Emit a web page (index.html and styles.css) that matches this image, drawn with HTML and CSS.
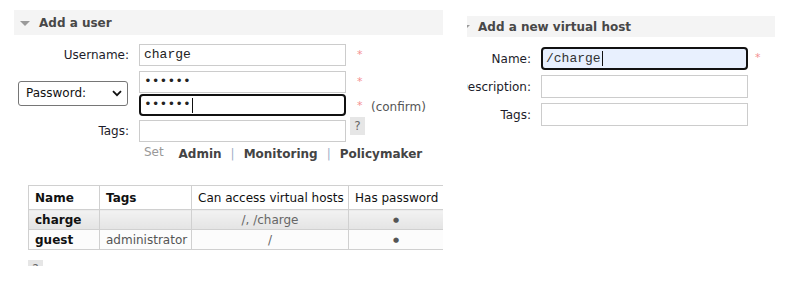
FILE: index.html
```html
<!DOCTYPE html>
<html lang="en">
<head>
    <meta charset="UTF-8">
    <title>Users and virtual hosts</title>
    <link rel="stylesheet" href="styles.css">
</head>
<body>
    <div class="panel users">
        <div class="section-head">
            <span class="arrow"></span>
            <h2>Add a user</h2>
        </div>

        <div class="user-form">
            <div class="label">Username:</div>
            <div class="field">charge</div>
            <div class="req">*</div>

            <div class="pick">
                <span>Password:</span>
                <svg width="10" height="7" viewBox="0 0 10 7"><path d="M1 1.2 L5 5.2 L9 1.2" fill="none" stroke="#111" stroke-width="1.8"/></svg>
            </div>
            <div class="field row-pw">••••••</div>
            <div class="req row-pw">*</div>

            <div class="field focus row-confirm">••••••<span class="caret"></span></div>
            <div class="req row-confirm">* <span class="note">(confirm)</span></div>

            <div class="label row-tags">Tags:</div>
            <div class="field row-tags"></div>
            <div class="help row-tags">?</div>

            <div class="set-line">
                <span class="set">Set</span>
                <b>Admin</b><span class="sep">|</span><b>Monitoring</b><span class="sep">|</span><b>Policymaker</b>
            </div>
        </div>

        <table class="list">
            <colgroup>
                <col class="c-name">
                <col class="c-tags">
                <col class="c-vh">
                <col class="c-pw">
            </colgroup>
            <thead>
                <tr>
                    <th>Name</th>
                    <th>Tags</th>
                    <th class="plain">Can access virtual hosts</th>
                    <th class="plain">Has password</th>
                </tr>
            </thead>
            <tbody>
                <tr class="alt">
                    <td><b>charge</b></td>
                    <td></td>
                    <td class="mid">/, /charge</td>
                    <td class="mid dot">●</td>
                </tr>
                <tr>
                    <td><b>guest</b></td>
                    <td class="grey">administrator</td>
                    <td class="mid">/</td>
                    <td class="mid dot">●</td>
                </tr>
            </tbody>
        </table>

        <div class="help bottom">?</div>
    </div>

    <div class="panel vhosts">
        <div class="section-head small">
            <span class="arrow"></span>
            <h2>Add a new virtual host</h2>
        </div>

        <div class="vhost-form">
            <div class="label"><span>Name:</span></div>
            <div class="field focus filled">/charge<span class="caret"></span></div>
            <div class="req">*</div>

            <div class="label"><span>Description:</span></div>
            <div class="field"></div>
            <div></div>

            <div class="label"><span>Tags:</span></div>
            <div class="field"></div>
            <div></div>
        </div>
    </div>
</body>
</html>
```

FILE: styles.css
```css
body {
    margin: 0;
    padding: 0;
    background: #fff;
    font-family: "DejaVu Sans", Verdana, sans-serif;
    font-size: 12px;
    color: #222;
    display: flex;
    align-items: flex-start;
}

.panel {
    overflow: hidden;
}

.users {
    width: 443px;
    height: 266px;
    padding: 10px 0 0 14px;
    box-sizing: border-box;
}

.vhosts {
    width: 321px;
    height: 285px;
    margin-left: 24px;
    padding-top: 16px;
    box-sizing: border-box;
}

/* section headers */
.section-head {
    display: flex;
    align-items: center;
    height: 25px;
    background: #f4f4f4;
}

.section-head h2 {
    margin: 0;
    font-size: 12px;
    font-weight: bold;
    color: #484848;
}

.arrow {
    width: 0;
    height: 0;
    border-left: 5px solid transparent;
    border-right: 5px solid transparent;
    border-top: 5px solid #9a9a9a;
    margin: 1px 9px 0 6px;
}

.section-head.small {
    height: 21px;
    width: 308px;
}

.section-head.small .arrow {
    margin-left: -7px;
    margin-right: 8px;
}

/* form fields */
.field {
    height: 22px;
    box-sizing: border-box;
    border: 1px solid #ccc;
    padding: 0 4px;
    font-family: "Liberation Mono", "Courier New", monospace;
    font-size: 13px;
    line-height: 20px;
    color: #222;
    display: flex;
    align-items: center;
}

.field.focus {
    border: 2px solid #111;
    border-radius: 4px;
    padding: 0 3px;
}

.field.filled {
    background: #e8f0fe;
    color: #333;
}

.caret {
    display: inline-block;
    width: 1px;
    height: 15px;
    background: #111;
    margin-left: 1px;
}

.label {
    text-align: right;
    color: #1c1c2a;
    align-self: center;
}

.req {
    color: #f49090;
    font-size: 11px;
    align-self: start;
    padding: 4px 0 0 1px;
    white-space: nowrap;
}

.note {
    color: #555;
    font-size: 12px;
    margin-left: 5px;
    position: relative;
    top: 2px;
}

.help {
    width: 15px;
    height: 18px;
    background: #e6e6e6;
    color: #666;
    font-size: 12px;
    text-align: center;
    line-height: 18px;
}

/* add user grid */
.user-form {
    display: grid;
    grid-template-columns: 115px 207px auto;
    column-gap: 10px;
    margin-top: 9px;
}

.user-form .help {
    margin: 1px 0 0 -6px;
}

.row-pw {
    margin-top: 5px;
}

.row-confirm {
    margin-top: 1px;
}

.row-tags {
    margin-top: 4px;
}

.pick {
    grid-row: 2 / span 2;
    align-self: center;
    justify-self: end;
    width: 110px;
    height: 25px;
    box-sizing: border-box;
    margin: 4px 1px 0 0;
    border: 1px solid #767676;
    border-radius: 3px;
    padding: 0 5px 0 7px;
    display: flex;
    align-items: center;
    justify-content: space-between;
    color: #111;
}

.set-line {
    grid-column: 2 / span 2;
    padding: 5px 0 0 5px;
    height: 18px;
    white-space: nowrap;
}

.set-line .set {
    color: #999;
    margin-right: 11px;
    position: relative;
    top: -2px;
}

.set-line b {
    color: #444;
}

.sep {
    color: #9fb0c8;
    margin: 0 9px;
}

/* user list */
.list {
    border-collapse: collapse;
    table-layout: fixed;
    margin: 20px 0 0 14px;
    width: 415px;
}

.c-name { width: 71px; }
.c-tags { width: 92px; }
.c-vh { width: 157px; }
.c-pw { width: 95px; }

.list th,
.list td {
    border: 1px solid #d0d0d0;
    padding: 0 6px;
    text-align: left;
    white-space: nowrap;
}

.list th {
    height: 23px;
    font-weight: bold;
    color: #111;
}

.list th.plain {
    font-weight: normal;
}

.list td {
    height: 19px;
    color: #111;
}

.list tr.alt td {
    background: linear-gradient(#f2f2f2, #e4e4e4);
}

.list tbody tr:not(.alt) td {
    background: #fcfcfc;
}

.list td.mid {
    text-align: center;
    color: #666;
}

.list td.grey {
    color: #555;
}

.list td.dot {
    font-size: 7px;
    color: #555;
}

.help.bottom {
    margin: 10px 0 0 14px;
}

/* add vhost grid */
.vhost-form {
    display: grid;
    grid-template-columns: 64px 207px auto;
    column-gap: 10px;
    row-gap: 5px;
    margin-top: 10px;
}

.vhost-form .field {
    height: 23px;
}

.vhost-form .label {
    display: flex;
    justify-content: flex-end;
    white-space: nowrap;
}

.vhost-form .req {
    padding-left: 0;
    margin-left: -3px;
    padding-top: 4px;
}
```
